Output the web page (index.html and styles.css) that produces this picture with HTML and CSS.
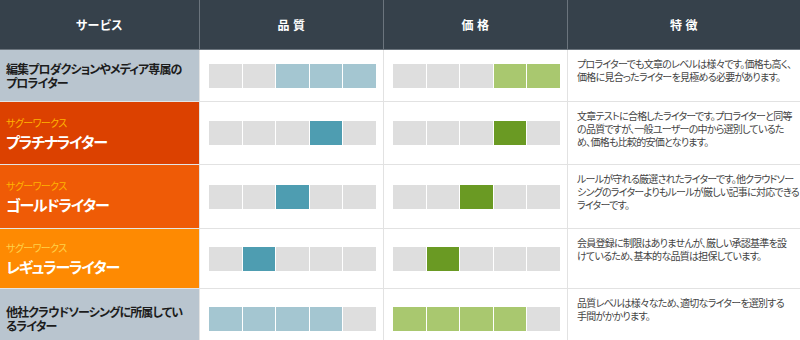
FILE: index.html
```
<!DOCTYPE html>
<html lang="ja">
<head>
<meta charset="utf-8">
<link rel="stylesheet" href="styles.css">
</head>
<body>
<div class="table">
  <div class="hd">サービス</div>
  <div class="hd">品&nbsp;質</div>
  <div class="hd">価&nbsp;格</div>
  <div class="hd last">特&nbsp;徴</div>

  <div class="svc grey r1"><span class="plain">編集プロダクションやメディア専属の<br>プロライター</span></div>
  <div class="barcell"><div class="bar"><i></i><i></i><i class="qb"></i><i class="qb"></i><i class="qb"></i></div></div>
  <div class="barcell"><div class="bar"><i></i><i></i><i></i><i class="pl"></i><i class="pl"></i></div></div>
  <div class="desc">プロライターでも文章のレベルは様々です。価格も高く、<br>価格に見合ったライターを見極める必要があります。</div>

  <div class="svc platinum r2"><span class="brand">サグーワークス</span><span class="name">プラチナライター</span></div>
  <div class="barcell"><div class="bar"><i></i><i></i><i></i><i class="qd"></i><i></i></div></div>
  <div class="barcell"><div class="bar"><i></i><i></i><i></i><i class="pd"></i><i></i></div></div>
  <div class="desc">文章テストに合格したライターです。プロライターと同等<br>の品質ですが、一般ユーザーの中から選別しているた<br>め、価格も比較的安価となります。</div>

  <div class="svc gold r3"><span class="brand">サグーワークス</span><span class="name">ゴールドライター</span></div>
  <div class="barcell"><div class="bar"><i></i><i></i><i class="qd"></i><i></i><i></i></div></div>
  <div class="barcell"><div class="bar"><i></i><i></i><i class="pd"></i><i></i><i></i></div></div>
  <div class="desc">ルールが守れる厳選されたライターです。他クラウドソー<br>シングのライターよりもルールが厳しい記事に対応できる<br>ライターです。</div>

  <div class="svc regular r4"><span class="brand light">サグーワークス</span><span class="name">レギュラーライター</span></div>
  <div class="barcell"><div class="bar"><i></i><i class="qd"></i><i></i><i></i><i></i></div></div>
  <div class="barcell"><div class="bar"><i></i><i class="pd"></i><i></i><i></i><i></i></div></div>
  <div class="desc">会員登録に制限はありませんが、厳しい承認基準を設<br>けているため、基本的な品質は担保しています。</div>

  <div class="svc grey r5"><span class="plain">他社クラウドソーシングに所属してい<br>るライター</span></div>
  <div class="barcell"><div class="bar"><i class="qb"></i><i class="qb"></i><i class="qb"></i><i class="qb"></i><i></i></div></div>
  <div class="barcell"><div class="bar"><i class="pl"></i><i class="pl"></i><i class="pl"></i><i class="pl"></i><i></i></div></div>
  <div class="desc">品質レベルは様々なため、適切なライターを選別する<br>手間がかかります。</div>
</div>
</body>
</html>
```
FILE: styles.css
```
* { box-sizing: border-box; }
html, body { margin: 0; padding: 0; background: #fff; }
body {
  font-family: "Noto Sans CJK JP", "Noto Sans", sans-serif;
  font-feature-settings: "palt";
  width: 800px;
  height: 340px;
  overflow: hidden;
}
.table {
  display: grid;
  grid-template-columns: 200px 184px 184px 232px;
  grid-template-rows: 50px 52px 63px 64px 60px 60px;
}
.hd {
  background: #36414b;
  color: #fff;
  font-weight: bold;
  font-size: 12px;
  display: flex;
  align-items: center;
  justify-content: center;
  border-right: 1px solid #6b747d;
  border-bottom: 1px solid #6b747d;
  letter-spacing: 0.5px;
}
.hd.last { border-right: none; }
.svc {
  display: flex;
  flex-direction: column;
  justify-content: center;
  padding: 0 6px;
  border-bottom: 1px solid #e4e4e4;
  border-right: 1px solid #e4e4e4;
}
.grey { background: #b9c5cf; }
.platinum { background: #dc4100; }
.gold { background: #ef5b06; }
.regular { background: #fe8a02; }
.plain {
  font-size: 12px;
  font-weight: bold;
  color: #1c1c1c;
  line-height: 14px;
  letter-spacing: -0.9px;
}
.brand {
  font-size: 10px;
  color: #ffb300;
  line-height: 14px;
  letter-spacing: -0.6px;
  margin-top: 2px;
}
.brand.light { color: #ffd24a; }
.name {
  font-size: 15px;
  font-weight: bold;
  color: #fff;
  line-height: 23px;
  letter-spacing: -1.2px;
}
.barcell {
  display: flex;
  align-items: center;
  padding: 0 7px 0 9px;
  border-right: 1px solid #e2e2e2;
  border-bottom: 1px solid #e2e2e2;
}
.bar {
  display: flex;
  gap: 1px;
  width: 167px;
  height: 24px;
}
.bar i {
  flex: 1;
  background: #dedede;
}
.bar i.qb { background: #a4c6d1; }
.bar i.qd { background: #4e9db1; }
.bar i.pl { background: #a9c86f; }
.bar i.pd { background: #6a9a23; }
.desc {
  font-size: 10px;
  color: #444;
  line-height: 13px;
  padding: 7px 0 0 9px;
  white-space: nowrap;
  letter-spacing: -0.75px;
  border-bottom: 1px solid #e2e2e2;
}
```
